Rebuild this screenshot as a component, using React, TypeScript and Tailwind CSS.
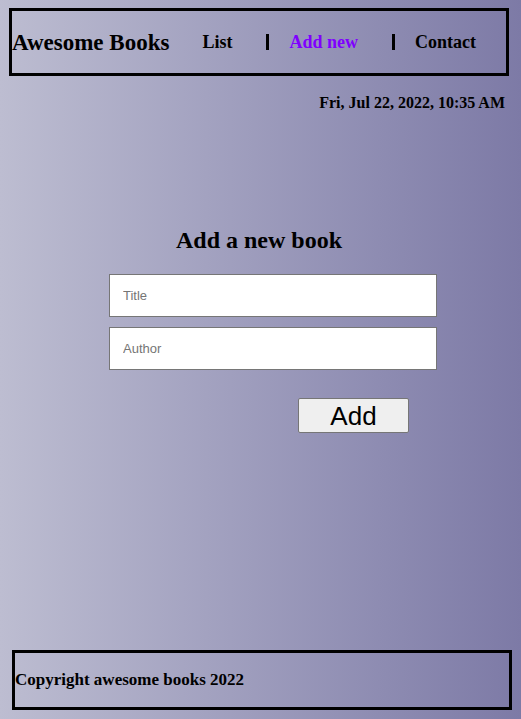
export default function App() {
  return (
    <div className="flex h-[719px] w-full flex-col overflow-hidden bg-gradient-to-r from-[#bdbdd1] to-[#7d7aa6] font-['Liberation_Serif',serif] text-black">
      {/* header */}
      <header className="ml-[9px] mt-[8px] flex h-[68px] w-[500px] items-center border-[3px] border-black">
        <h1 className="text-[23px] font-bold leading-none">Awesome Books</h1>
        <nav className="flex items-center text-[18px] font-bold">
          <a className="ml-[33px]">List</a>
          <span className="ml-[34px] h-[16px] w-[3px] bg-black" />
          <a className="ml-[20px] text-[#7f00ff]">Add new</a>
          <span className="ml-[34px] h-[16px] w-[3px] bg-black" />
          <a className="ml-[20px]">Contact</a>
        </nav>
      </header>

      <p className="mt-[18px] pr-[16px] text-right text-[16px] font-bold leading-[18px]">
        Fri, Jul 22, 2022, 10:35 AM
      </p>

      {/* form */}
      <section className="mt-[114px] flex flex-col items-center">
        <h2 className="ml-[-3px] text-[24px] font-bold leading-[28px]">Add a new book</h2>
        <form className="ml-[25px] mt-[20px] flex w-[328px] flex-col gap-[10px]" onSubmit={(e) => e.preventDefault()}>
          <input
            placeholder="Title"
            className="h-[43px] w-full border border-[#767676] bg-white px-[13px] font-['Liberation_Sans',sans-serif] text-[13px] placeholder:text-[#757575]"
          />
          <input
            placeholder="Author"
            className="h-[43px] w-full border border-[#767676] bg-white px-[13px] font-['Liberation_Sans',sans-serif] text-[13px] placeholder:text-[#757575]"
          />
          <div className="mt-[18px] flex">
            <button
              type="submit"
              className="ml-[189px] flex h-[35px] w-[111px] items-center justify-center rounded-[2px] border border-[#767676] bg-[#efefef] font-['Liberation_Sans',sans-serif] text-[26px] leading-none"
            >
              Add
            </button>
          </div>
        </form>
      </section>

      {/* footer */}
      <footer className="mb-[9px] ml-[12px] mt-auto flex h-[60px] w-[500px] items-center border-[3px] border-black">
        <p className="text-[17px] font-bold">Copyright awesome books 2022</p>
      </footer>
    </div>
  );
}
